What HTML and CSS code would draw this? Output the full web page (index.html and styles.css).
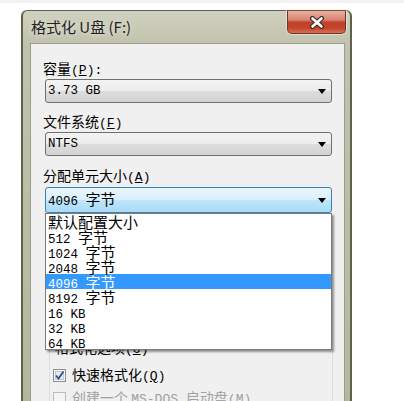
FILE: index.html
```html
<!DOCTYPE html>
<html lang="zh-CN">
<head>
<meta charset="utf-8">
<title>格式化 U盘 (F:)</title>
<link rel="stylesheet" href="styles.css">
</head>
<body>
<div class="strip"></div>
<div class="window">
  <div class="titlebar">
    <span class="title">格式化 U盘 (F:)</span>
    <div class="close">
      <svg width="16" height="13" viewBox="0 0 16 13">
        <path d="M3.5 2.5 L12.5 10.5 M12.5 2.5 L3.5 10.5" stroke="#3a2a2a" stroke-width="5" stroke-linecap="round" fill="none"/>
        <path d="M3.5 2.5 L12.5 10.5 M12.5 2.5 L3.5 10.5" stroke="#fff" stroke-width="2.6" stroke-linecap="round" fill="none"/>
      </svg>
    </div>
  </div>
  <div class="client">
    <div class="label">容量<span class="m lm">(<u>P</u>):</span></div>
    <div class="combo c1"><span class="m">3.73 GB</span><i class="arrow"></i></div>
    <div class="label l2">文件系统<span class="m lm">(<u>F</u>)</span></div>
    <div class="combo c2"><span class="m">NTFS</span><i class="arrow"></i></div>
    <div class="label l3">分配单元大小<span class="m lm">(<u>A</u>)</span></div>
    <div class="combo-wrap">
      <div class="combo focus"><span><span class="m">4096 </span>字节</span><i class="arrow"></i></div>
      <div class="list">
        <div class="item">默认配置大小</div>
        <div class="item"><span class="m">512 </span>字节</div>
        <div class="item"><span class="m">1024 </span>字节</div>
        <div class="item"><span class="m">2048 </span>字节</div>
        <div class="item sel"><span class="m">4096 </span>字节</div>
        <div class="item"><span class="m">8192 </span>字节</div>
        <div class="item"><span class="m">16 KB</span></div>
        <div class="item"><span class="m">32 KB</span></div>
        <div class="item"><span class="m">64 KB</span></div>
      </div>
    </div>
    <fieldset class="group">
      <legend>格式化选项<span class="m lm">(<u>O</u>)</span></legend>
      <div class="cb-row r1">
        <svg class="cb" width="13" height="13" viewBox="0 0 13 13">
          <rect x="0.5" y="0.5" width="12" height="12" fill="#f6f6f6" stroke="#8e8f8f"/>
          <rect x="2.5" y="2.5" width="8" height="8" fill="#e6e8ea" stroke="#c4c6c9"/>
          <path d="M3 6.5 L5.5 9.5 L10.5 2.5" stroke="#2d4f9e" stroke-width="1.8" fill="none"/>
        </svg>
        <span>快速格式化<span class="m lm">(<u>Q</u>)</span></span>
      </div>
      <div class="cb-row r2 disabled">
        <svg class="cb" width="13" height="13" viewBox="0 0 13 13">
          <rect x="0.5" y="0.5" width="12" height="12" fill="#f4f4f4" stroke="#bcbcbc"/>
        </svg>
        <span>创建一个 <span class="m lm">MS-DOS </span>启动盘<span class="m lm">(<u>M</u>)</span></span>
      </div>
    </fieldset>
  </div>
</div>
</body>
</html>
```
FILE: styles.css
```css
html, body {
  margin: 0;
  background: #fff;
  overflow: hidden;
}
body {
  width: 404px;
  height: 401px;
  font-family: "Noto Sans CJK SC", sans-serif;
  color: #000;
}
.m {
  font-family: "Liberation Mono", monospace;
  font-size: 0.834em;
}
.m.lm {
  font-size: 0.93em;
}
.strip {
  height: 3px;
  background: #f3f3f3;
}
.window {
  margin: 7px 0 0 21px;
  width: 331px;
  height: 391px;
  box-sizing: border-box;
  border-style: solid;
  border-color: #5f624a;
  border-width: 1px 2px 0 2px;
  border-radius: 6px 6px 0 0;
  background: linear-gradient(#d0d1bf, #c2c3ae 32px, #b5b69f);
  display: flex;
  flex-direction: column;
}
.titlebar {
  height: 32px;
  display: flex;
  align-items: flex-start;
  padding-left: 8px;
  flex: none;
}
.title {
  font-size: 15px;
  line-height: 32px;
  color: #222;
  text-shadow: 0 0 5px rgba(255, 255, 255, 0.7);
}
.close {
  margin-left: auto;
  margin-right: 4px;
  margin-top: -1px;
  width: 59px;
  height: 24px;
  box-sizing: border-box;
  border: 1px solid #6e3426;
  border-top-color: #8a4a3a;
  border-radius: 0 0 5px 5px;
  background: linear-gradient(#e6b2a3 0%, #d88471 40%, #c0402a 52%, #c4462e 78%, #d9715a 100%);
  box-shadow: 0 0 0 1px rgba(240, 240, 228, 0.6);
  display: flex;
  align-items: center;
  justify-content: center;
}
.client {
  flex: 1;
  margin: 0 5px 0 7px;
  background: #f0f0f0;
  border: 1px solid #9c9d88;
  border-bottom: none;
  padding: 14px 12px 0 12px;
}
.label {
  font-size: 14px;
  line-height: 20px;
  height: 20px;
  white-space: nowrap;
}
.l2 { margin-top: 8px; }
.l3 { margin-top: 9px; }
.combo {
  margin-top: 1px;
  margin-left: 2px;
  width: 287px;
  height: 24px;
  box-sizing: border-box;
  border: 1px solid #707070;
  border-radius: 3px;
  background: linear-gradient(#f3f3f3 0%, #ececec 48%, #dddddd 52%, #d2d2d2 100%);
  display: flex;
  align-items: center;
  justify-content: space-between;
  padding-left: 2px;
  font-size: 15px;
  line-height: 15px;
  white-space: nowrap;
}
.arrow {
  width: 0;
  height: 0;
  border-left: 4.5px solid transparent;
  border-right: 4.5px solid transparent;
  border-top: 5px solid #000;
  margin-right: 5px;
}
.combo-wrap {
  position: relative;
  margin-top: 2px;
}
.combo.focus {
  margin-top: 0;
  height: 26px;
  border-color: #3c7fb1;
  background: linear-gradient(#eaf6fd 0%, #d9f0fc 48%, #bee6fd 52%, #a9daf5 100%);
}
.list {
  position: absolute;
  top: 100%;
  left: 2px;
  width: 287px;
  box-sizing: border-box;
  border: 1px solid #7a7a7a;
  background: #fff;
  box-shadow: 2px 2px 2px rgba(0, 0, 0, 0.4);
  z-index: 2;
  font-size: 15px;
  line-height: 15px;
}
.item {
  height: 15px;
  padding-left: 2px;
  white-space: nowrap;
}
.item.sel {
  background: #3399ff;
  color: #fff;
}
.group {
  margin: 124px 0 0 6px;
  width: 284px;
  box-sizing: border-box;
  border: 1px solid #d5dfe5;
  border-radius: 3px;
  padding: 0 0 0 3px;
  min-width: 0;
}
.group legend {
  padding: 0 2px;
  font-size: 14px;
  line-height: 20px;
  white-space: nowrap;
}
.cb-row {
  display: flex;
  align-items: center;
  gap: 6px;
  height: 18px;
  font-size: 14px;
  line-height: 18px;
  white-space: nowrap;
}
.cb { flex: none; }
.r1 { margin-top: 6px; }
.r2 { margin-top: 5px; }
.disabled { color: #a0a0a0; }
```
